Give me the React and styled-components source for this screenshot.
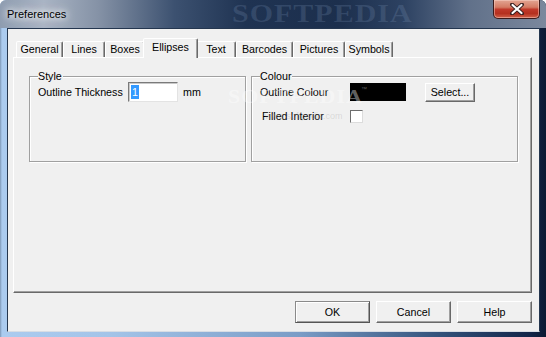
import styled, { createGlobalStyle } from "styled-components";

const GlobalStyle = createGlobalStyle`
  html, body {
    margin: 0;
    padding: 0;
    background: #ffffff;
  }
  * {
    box-sizing: border-box;
  }
`;

const Window = styled.div`
  position: relative;
  width: 546px;
  height: 337px;
  display: flex;
  flex-direction: column;
  overflow: hidden;
  border-radius: 6px 6px 0 0;
  background: linear-gradient(90deg, #7d97b6 0px, #abcbef 2px, #a4c4e8 20%, #7a9cc6 55%, #34537c 80%, #13264a 97%, #0b1a33 100%);
  font-family: "Liberation Sans", Arial, sans-serif;
  font-size: 10.7px;
  color: #000;
`;

const TitleBar = styled.div`
  position: relative;
  height: 28px;
  flex: none;
  display: flex;
  align-items: center;
  padding-left: 7px;
  background: linear-gradient(90deg, #8e9cb0 0%, #a9b4c4 8%, #8592a6 18%, #3c5170 32%, #1f3352 45%, #1c2f4d 62%, #2d4262 74%, #61718a 86%, #7b889d 100%);
`;

const Title = styled.span`
  font-size: 11px;
  color: #000;
  margin-top: -1px;
  text-shadow: 0 0 6px #fff, 0 0 10px #fff, 0 0 14px rgba(255, 255, 255, 0.8);
`;

const CloseButton = styled.div`
  position: absolute;
  top: 0;
  right: 6px;
  width: 47px;
  height: 19px;
  display: flex;
  align-items: center;
  justify-content: center;
  border: 1px solid #3b1b1b;
  border-top: none;
  border-radius: 0 0 5px 5px;
  background: linear-gradient(180deg, #e2a593 0%, #d47b64 40%, #c0392a 52%, #b5301f 75%, #d0624a 100%);
  box-shadow: inset 0 0 0 1px rgba(255, 220, 210, 0.45);
`;

const Client = styled.div`
  flex: 1;
  margin: 0 6px 5px 7px;
  display: flex;
  flex-direction: column;
  padding: 9px 7px 0 5px;
  background: #f0f0f0;
  border: 1px solid #24364f;
  border-bottom-color: #d8dde4;
`;

const TabRow = styled.div`
  display: flex;
  align-items: flex-end;
  height: 19px;
  margin-left: 3px;
`;

const Tab = styled.div`
  position: relative;
  z-index: ${(p) => (p.$active ? 1 : 0)};
  width: ${(p) => p.$w + (p.$active ? 4 : 0)}px;
  height: ${(p) => (p.$active ? 20 : 16)}px;
  margin: 0 ${(p) => (p.$active ? -2 : 0)}px ${(p) => (p.$active ? -1 : 0)}px;
  padding-top: ${(p) => (p.$active ? 2 : 1)}px;
  line-height: 13px;
  text-align: center;
  background: #f0f0f0;
  border: 1px solid;
  border-bottom: none;
  border-color: #ffffff #696969 transparent #ffffff;
  border-radius: 2px 2px 0 0;
  box-shadow: inset -1px 0 #a0a0a0;
  white-space: nowrap;
`;

const Panel = styled.div`
  height: 236px;
  display: flex;
  gap: 5px;
  padding: 18px 0 0 15px;
  border: 1px solid;
  border-color: #ffffff #696969 #696969 #ffffff;
  box-shadow: inset -1px -1px #a0a0a0;
`;

const GroupBox = styled.div`
  width: ${(p) => p.$w}px;
  height: 86px;
  border: 1px solid #a0a0a0;
  box-shadow: inset 1px 1px #ffffff, 1px 1px #ffffff;
  padding: 0 8px;
`;

const Legend = styled.div`
  width: fit-content;
  margin: -7px 0 0 0;
  padding: 0 1px 0 0;
  line-height: 13px;
  background: #f0f0f0;
`;

const Row = styled.div`
  display: flex;
  align-items: center;
  height: 20px;
  margin-top: ${(p) => p.$mt || 0}px;
`;

const Label = styled.span`
  width: ${(p) => p.$w || 90}px;
  padding-left: ${(p) => p.$indent || 0}px;
  flex: none;
`;

const TextBox = styled.div`
  width: 50px;
  height: 20px;
  padding: 2px 0 0 2px;
  background: #ffffff;
  border: 1px solid;
  border-color: #7a7a7a #e3e3e3 #e3e3e3 #7a7a7a;
  box-shadow: inset 1px 1px #c8c8c8;
`;

const Selected = styled.span`
  display: inline-block;
  height: 14px;
  line-height: 14px;
  padding: 0 1px;
  background: #3399ff;
  color: #ffffff;
`;

const Unit = styled.span`
  margin-left: 5px;
`;

const Swatch = styled.div`
  width: 56px;
  height: 18px;
  background: #000000;
  color: #5a5a5a;
  font-size: 6px;
  padding: 3px 0 0 11px;
`;

const Button = styled.button`
  width: ${(p) => p.$w || 75}px;
  height: ${(p) => p.$h || 22}px;
  margin-left: ${(p) => p.$ml || 0}px;
  padding: 0;
  font-family: "Liberation Sans", Arial, sans-serif;
  font-size: 10.7px;
  color: #000;
  background: #f0f0f0;
  border: 1px solid;
  border-color: #ffffff #696969 #696969 #ffffff;
  box-shadow: inset -1px -1px #a0a0a0;
  ${(p) =>
    p.$default &&
    `
    border-color: #8a8a8a #555555 #555555 #8a8a8a;
    box-shadow: inset 1px 1px #ffffff, inset -1px -1px #a0a0a0;
  `}
`;

const CheckBox = styled.div`
  width: 13px;
  height: 13px;
  margin-top: 1px;
  background: #ffffff;
  border: 1px solid;
  border-color: #6d6d6d #dcdcdc #dcdcdc #6d6d6d;
`;

const ButtonBar = styled.div`
  display: flex;
  justify-content: flex-end;
  gap: 6px;
  padding-top: 8px;
`;

const Watermark = styled.div`
  position: absolute;
  left: ${(p) => p.$x}px;
  top: ${(p) => p.$y}px;
  pointer-events: none;
  white-space: nowrap;
  font-family: "Liberation Serif", "Times New Roman", serif;
  font-weight: bold;
  font-size: ${(p) => p.$size}px;
  letter-spacing: 1px;
  color: ${(p) => p.$color};
  transform: scaleY(0.85);
`;

const SmallMark = styled.div`
  position: absolute;
  left: 265px;
  top: 111px;
  pointer-events: none;
  font-family: "Liberation Sans", Arial, sans-serif;
  font-size: 9px;
  color: rgba(160, 160, 160, 0.3);
`;

const tabs = [
  { label: "General", w: 47 },
  { label: "Lines", w: 42 },
  { label: "Boxes", w: 40 },
  { label: "Ellipses", w: 51, active: true },
  { label: "Text", w: 40 },
  { label: "Barcodes", w: 57 },
  { label: "Pictures", w: 52 },
  { label: "Symbols", w: 48 },
];

const App = () => {
  return (
    <>
      <GlobalStyle />
      <Window>
        <TitleBar>
          <Title>Preferences</Title>
          <CloseButton>
            <svg width="14" height="12" viewBox="0 0 14 12">
              <path d="M2 1.5 L12 10.5 M12 1.5 L2 10.5" stroke="#3a2020" strokeWidth="4" strokeLinecap="round" />
              <path d="M2.5 2 L11.5 10 M11.5 2 L2.5 10" stroke="#ffffff" strokeWidth="2.2" strokeLinecap="round" />
            </svg>
          </CloseButton>
        </TitleBar>
        <Client>
          <TabRow>
            {tabs.map((t) => (
              <Tab key={t.label} $w={t.w} $active={t.active}>
                {t.label}
              </Tab>
            ))}
          </TabRow>
          <Panel>
            <GroupBox $w={217}>
              <Legend>Style</Legend>
              <Row $mt={-1}>
                <Label>Outline Thickness</Label>
                <TextBox>
                  <Selected>1</Selected>
                </TextBox>
                <Unit>mm</Unit>
              </Row>
            </GroupBox>
            <GroupBox $w={267}>
              <Legend>Colour</Legend>
              <Row $mt={-1}>
                <Label>Outline Colour</Label>
                <Swatch>™</Swatch>
                <Button $w={50} $h={19} $ml={19}>
                  Select...
                </Button>
              </Row>
              <Row $mt={4}>
                <Label $indent={2}>Filled Interior</Label>
                <CheckBox />
              </Row>
            </GroupBox>
          </Panel>
          <ButtonBar>
            <Button $default>OK</Button>
            <Button>Cancel</Button>
            <Button>Help</Button>
          </ButtonBar>
        </Client>
        <Watermark $x={232} $y={-4} $size={30} $color="rgba(130, 155, 190, 0.22)">
          SOFTPEDIA
        </Watermark>
        <Watermark $x={228} $y={84} $size={22} $color="rgba(255, 255, 255, 0.4)">
          SOFTPEDIA
        </Watermark>
        <SmallMark>www.softpedia.com</SmallMark>
      </Window>
    </>
  );
};

export default App;
